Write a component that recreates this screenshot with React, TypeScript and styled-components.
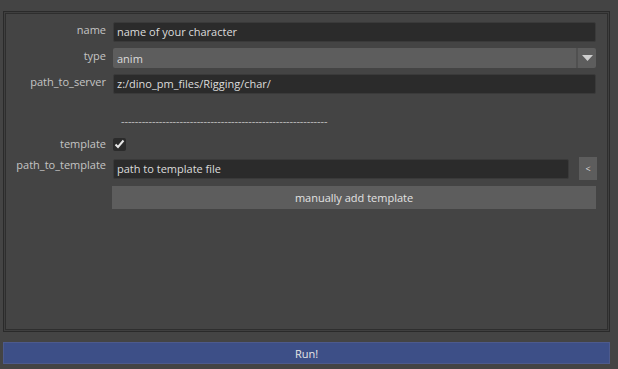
import styled, { createGlobalStyle } from 'styled-components';

const GlobalStyle = createGlobalStyle`
  html, body {
    margin: 0;
    padding: 0;
    background: #444444;
  }
  body {
    font-family: "Open Sans", "Liberation Sans", sans-serif;
    font-size: 11px;
    color: #c8c8c8;
  }
`;

export default function App() {
    return (
        <>
            <GlobalStyle />
            <Page>
                <Frame>
                    <FrameInner>
                        <Form>
                            <Row>
                                <Label>name</Label>
                                <TextField>name of your character</TextField>
                            </Row>
                            <Row>
                                <Label>type</Label>
                                <Combo>
                                    <ComboValue>anim</ComboValue>
                                    <ComboArrow>
                                        <svg width="11" height="6" viewBox="0 0 11 6">
                                            <polygon points="0,0 11,0 5.5,6" fill="#cfcfcf" />
                                        </svg>
                                    </ComboArrow>
                                </Combo>
                            </Row>
                            <Row>
                                <Label>path_to_server</Label>
                                <TextField>z:/dino_pm_files/Rigging/char/</TextField>
                            </Row>
                            <Separator>{'-'.repeat(60)}</Separator>
                            <Row center>
                                <Label>template</Label>
                                <CheckBox>
                                    <svg width="11" height="10" viewBox="0 0 11 10">
                                        <polyline points="1.5,5.5 4,8 9.5,1.5" fill="none" stroke="#e6e6e6" strokeWidth="2" />
                                    </svg>
                                </CheckBox>
                            </Row>
                            <Row tight>
                                <Label>path_to_template</Label>
                                <FieldGroup>
                                    <TextField>path to template file</TextField>
                                    <SmallButton>&lt;</SmallButton>
                                </FieldGroup>
                            </Row>
                            <Row>
                                <span />
                                <Button>manually add template</Button>
                            </Row>
                        </Form>
                    </FrameInner>
                </Frame>
                <RunButton>Run!</RunButton>
            </Page>
        </>
    );
}

const Page = styled.div`
  display: flex;
  flex-direction: column;
  height: 369px;
  box-sizing: border-box;
  padding: 11px 8px 5px 3px;
  gap: 10px;
`;

const Frame = styled.div`
  flex: 1;
  display: flex;
  border: 1px solid #2a2a2a;
  padding: 1px;
  background: #3f3f3f;
`;

const FrameInner = styled.div`
  flex: 1;
  border: 1px solid #2e2e2e;
  background: #444444;
`;

const Form = styled.div`
  display: flex;
  flex-direction: column;
  gap: 6px;
  padding: 8px 11px 0 0;
`;

const Row = styled.div<{ center?: boolean; tight?: boolean }>`
  display: grid;
  grid-template-columns: 100px 1fr;
  column-gap: 7px;
  align-items: ${(props) => (props.center ? 'center' : 'start')};
  margin-top: ${(props) => (props.tight ? '-1px' : '0')};
`;

const Label = styled.div`
  text-align: right;
  line-height: 16px;
  color: #c4c4c4;
  white-space: nowrap;
`;

const TextField = styled.div`
  flex: 1;
  height: 20px;
  box-sizing: border-box;
  background: #2b2b2b;
  border: 1px solid #3a3a3a;
  border-radius: 2px;
  padding: 0 3px;
  line-height: 18px;
  color: #dcdcdc;
  white-space: nowrap;
`;

const Combo = styled.div`
  display: flex;
  height: 20px;
  background: #5d5d5d;
  border-radius: 2px;
`;

const ComboValue = styled.div`
  flex: 1;
  padding: 0 4px;
  line-height: 21px;
  color: #dcdcdc;
`;

const ComboArrow = styled.div`
  width: 18px;
  display: flex;
  align-items: center;
  justify-content: center;
  border-left: 2px solid #505050;
`;

const Separator = styled.div`
  padding: 14px 0 2px 115px;
  line-height: 14px;
  color: #c0c0c0;
  letter-spacing: -0.1px;
  white-space: nowrap;
  overflow: hidden;
`;

const CheckBox = styled.div`
  width: 13px;
  height: 13px;
  background: #2b2b2b;
  border-radius: 2px;
  display: flex;
  align-items: center;
  justify-content: center;
`;

const FieldGroup = styled.div`
  display: flex;
  align-items: center;
  gap: 10px;
  margin-right: -1px;
`;

const SmallButton = styled.div`
  width: 18px;
  height: 23px;
  background: #5d5d5d;
  color: #dcdcdc;
  font-size: 9px;
  display: flex;
  align-items: center;
  justify-content: center;
`;

const Button = styled.div`
  height: 23px;
  margin-left: -1px;
  background: #5d5d5d;
  color: #e2e2e2;
  display: flex;
  align-items: center;
  justify-content: center;
`;

const RunButton = styled.div`
  height: 22px;
  box-sizing: border-box;
  background: #3d4f87;
  border: 1px solid #4d5a8c;
  color: #e6e6e6;
  display: flex;
  align-items: center;
  justify-content: center;
`;
